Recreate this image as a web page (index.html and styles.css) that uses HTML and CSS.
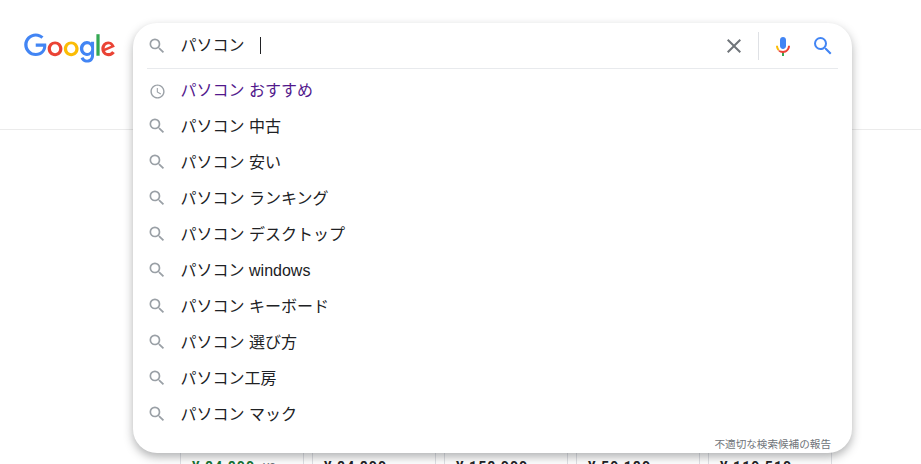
FILE: index.html
```html
<!DOCTYPE html>
<html lang="ja">
<head>
<meta charset="utf-8">
<title>パソコン - Google 検索</title>
<link rel="stylesheet" href="styles.css">
</head>
<body>
<header class="page-header"></header>
<main class="cards">
  <div class="card"><span class="price price-green">¥ 84,800</span><span class="was">¥9</span></div>
  <div class="card"><span class="price">¥ 84,800</span></div>
  <div class="card"><span class="price">¥ 158,000</span></div>
  <div class="card"><span class="price">¥ 59,180</span></div>
  <div class="card"><span class="price">¥ 119,510</span></div>
</main>

<svg class="logo" viewBox="0 0 90 29.3" aria-label="Google">
  <path fill="#4285f4" d="M11.6 22.6C5.4 22.6.2 17.6.2 11.4S5.4.2 11.6.2c3.4 0 5.9 1.3 7.7 3.1l-2.2 2.2c-1.3-1.2-3.1-2.2-5.5-2.2-4.5 0-8.1 3.7-8.1 8.2s3.6 8.2 8.1 8.2c2.9 0 4.6-1.2 5.7-2.3.9-.9 1.5-2.2 1.7-4h-7.4V10.3h10.3c.1.6.2 1.2.2 2 0 2.3-.6 5.1-2.7 7.1-2 2.1-4.5 3.2-7.9 3.2z"/>
  <path fill="#ea4335" d="M38 15.4c0 4.2-3.3 7.3-7.3 7.3s-7.3-3.1-7.3-7.3c0-4.2 3.3-7.3 7.3-7.3s7.3 3 7.3 7.3zm-3.2 0c0-2.6-1.9-4.4-4.1-4.4s-4.1 1.8-4.1 4.4c0 2.6 1.9 4.4 4.1 4.4s4.1-1.8 4.1-4.4z"/>
  <path fill="#fbbc05" d="M54 15.4c0 4.2-3.3 7.3-7.3 7.3s-7.3-3.1-7.3-7.3c0-4.2 3.3-7.3 7.3-7.3s7.3 3 7.3 7.3zm-3.2 0c0-2.6-1.9-4.4-4.1-4.4s-4.1 1.8-4.1 4.4c0 2.6 1.9 4.4 4.1 4.4s4.1-1.8 4.1-4.4z"/>
  <path fill="#4285f4" d="M69.3 8.5v13c0 5.4-3.2 7.6-6.9 7.6-3.5 0-5.7-2.4-6.4-4.3l2.8-1.2c.5 1.2 1.7 2.6 3.6 2.6 2.4 0 3.9-1.5 3.9-4.3v-1.1h-.1c-.7.9-2.1 1.7-3.9 1.7-3.7 0-7-3.2-7-7.3s3.3-7.4 7-7.4c1.8 0 3.2.8 3.9 1.7h.1V8.5h3zm-2.8 6.9c0-2.6-1.7-4.4-3.9-4.4s-4 1.9-4 4.4 1.8 4.3 4 4.3 3.9-1.8 3.9-4.3z"/>
  <path fill="#34a853" d="M71.6 1h3.2v21.3h-3.2z"/>
  <path fill="#ea4335" d="M87.3 17.8l2.5 1.7c-.8 1.2-2.8 3.2-6.1 3.2-4.1 0-7.2-3.2-7.2-7.3 0-4.3 3.1-7.3 6.8-7.3 3.8 0 5.6 3 6.2 4.6l.3.8-9.7 4c.7 1.4 1.9 2.2 3.5 2.2s2.8-.8 3.7-2zm-7.6-2.6l6.5-2.7c-.4-.9-1.4-1.5-2.7-1.5-1.6 0-3.9 1.4-3.8 4.2z"/>
</svg>

<section class="suggest">
  <div class="search-row">
    <svg class="ico" viewBox="0 0 24 24"><use href="#mag"/></svg>
    <div class="query">パソコン<span class="caret"></span></div>
    <div class="actions">
      <svg class="clear" viewBox="0 0 24 24"><path fill="#70757a" d="M19 6.41 17.59 5 12 10.59 6.41 5 5 6.41 10.59 12 5 17.59 6.41 19 12 13.41 17.59 19 19 17.59 13.41 12z"/></svg>
      <span class="vline"></span>
      <svg class="mic" viewBox="0 0 24 24">
        <path fill="#4285f4" d="M12 15c1.66 0 3-1.31 3-2.97V5.98C15 4.31 13.66 3 12 3S9 4.31 9 5.98v6.05C9 13.69 10.34 15 12 15z"/>
        <path fill="#34a853" d="M11 18.07h2V22h-2z"/>
        <path fill="#fbbc05" d="M7.05 16.87c-1.27-1.33-2.05-3.12-2.05-5.1h2c0 1.44.56 2.75 1.47 3.72l-1.42 1.38z"/>
        <path fill="#ea4335" d="M12 16.93c-1.39 0-2.69-.38-3.5-.64l-1.45 .58c1.27 1.33 3.03 2.26 4.95 2.26s3.68-.93 4.95-2.26c1.28-1.33 2.05-3.12 2.05-5.1h-2c0 1.44-.56 2.75-1.47 3.72-.91.96-2.15 1.44-3.53 1.44z"/>
      </svg>
      <svg class="go" viewBox="0 0 24 24"><path fill="#4285f4" d="M15.5 14h-.79l-.28-.27A6.47 6.47 0 0 0 16 9.5 6.5 6.5 0 1 0 9.5 16c1.61 0 3.09-.59 4.23-1.57l.27.28v.79l5 4.99L20.49 19l-4.99-5zm-6 0C7.01 14 5 11.99 5 9.5S7.01 5 9.5 5 14 7.01 14 9.5 11.99 14 9.5 14z"/></svg>
    </div>
  </div>
  <div class="rule"></div>
  <ul class="list">
    <li class="item visited">
      <svg class="clock" viewBox="0 0 24 24"><path fill="#9aa0a6" d="M11.99 2C6.47 2 2 6.48 2 12s4.47 10 9.99 10C17.52 22 22 17.52 22 12S17.52 2 11.99 2zM12 20c-4.42 0-8-3.58-8-8s3.58-8 8-8 8 3.58 8 8-3.58 8-8 8zm.5-13H11v6l5.25 3.15.75-1.23-4.5-2.67z"/></svg>
      <span>パソコン おすすめ</span>
    </li>
    <li class="item"><svg class="ico" viewBox="0 0 24 24"><use href="#mag"/></svg><span>パソコン 中古</span></li>
    <li class="item"><svg class="ico" viewBox="0 0 24 24"><use href="#mag"/></svg><span>パソコン 安い</span></li>
    <li class="item"><svg class="ico" viewBox="0 0 24 24"><use href="#mag"/></svg><span>パソコン ランキング</span></li>
    <li class="item"><svg class="ico" viewBox="0 0 24 24"><use href="#mag"/></svg><span>パソコン デスクトップ</span></li>
    <li class="item"><svg class="ico" viewBox="0 0 24 24"><use href="#mag"/></svg><span>パソコン windows</span></li>
    <li class="item"><svg class="ico" viewBox="0 0 24 24"><use href="#mag"/></svg><span>パソコン キーボード</span></li>
    <li class="item"><svg class="ico" viewBox="0 0 24 24"><use href="#mag"/></svg><span>パソコン 選び方</span></li>
    <li class="item"><svg class="ico" viewBox="0 0 24 24"><use href="#mag"/></svg><span>パソコン工房</span></li>
    <li class="item"><svg class="ico" viewBox="0 0 24 24"><use href="#mag"/></svg><span>パソコン マック</span></li>
  </ul>
  <div class="report">不適切な検索候補の報告</div>
</section>

<svg class="defs" width="0" height="0"><defs><path id="mag" fill="#9aa0a6" d="M15.5 14h-.79l-.28-.27A6.47 6.47 0 0 0 16 9.5 6.5 6.5 0 1 0 9.5 16c1.61 0 3.09-.59 4.23-1.57l.27.28v.79l5 4.99L20.49 19l-4.99-5zm-6 0C7.01 14 5 11.99 5 9.5S7.01 5 9.5 5 14 7.01 14 9.5 11.99 14 9.5 14z"/></defs></svg>
</body>
</html>
```
FILE: styles.css
```css
html, body { margin: 0; height: 464px; overflow: hidden; background: #fff; }
body { position: relative; font-family: Roboto, "Liberation Sans", "Noto Sans CJK JP", sans-serif; color: #202124; }

.page-header { height: 129px; border-bottom: 1px solid #ebebeb; }

.cards { display: flex; gap: 8px; padding: 0 0 0 180px; margin-top: 200px; height: 134px; overflow: hidden; }
.card { width: 124px; height: 200px; flex: none; box-sizing: border-box; border: 1px solid #dfe1e5; padding: 128px 11px 0; display: flex; gap: 8px; align-items: baseline; }
.price { font-size: 14px; font-weight: 700; letter-spacing: 1.05px; white-space: nowrap; }
.price-green { color: #137333; }
.was { font-size: 12px; color: #70757a; }

.logo { position: absolute; left: 24px; top: 33px; width: 91px; height: 30px; }

.suggest { position: absolute; left: 133px; top: 23px; width: 719px; height: 430px; background: #fff; border-radius: 24px; box-shadow: 0 4px 10px rgba(32,33,36,.35); display: flex; flex-direction: column; }

.search-row { height: 45px; display: flex; align-items: center; padding-left: 14px; }
.ico { width: 20px; height: 20px; flex: none; }
.clock { width: 17px; height: 17px; flex: none; margin: 2px 1.5px 0; }
.query { margin-left: 13.6px; font-size: 16px; line-height: 20px; display: flex; align-items: center; font-family: "Liberation Sans", "Noto Sans CJK JP", sans-serif; }
.caret { width: 1px; height: 17px; background: #202124; margin-left: 15.4px; }
.actions { margin-left: auto; display: flex; align-items: center; padding-right: 17px; }
.clear { width: 24px; height: 24px; }
.vline { width: 1px; height: 28px; background: #dfe1e5; margin: 0 12px; }
.mic { width: 24px; height: 24px; margin-right: 16px; }
.go { width: 24px; height: 24px; }

.rule { height: 1px; background: #e8eaed; margin: 0 14px; }

.list { list-style: none; margin: 3px 0 0; padding: 0; }
.item { height: 36px; display: flex; align-items: center; padding-left: 14px; font-size: 16px; font-family: "Liberation Sans", "Noto Sans CJK JP", sans-serif; }
.item span { margin: 0 0 2px 13.6px; }
.visited span { color: #52188c; }

.report { margin-top: auto; align-self: flex-end; padding: 0 21px 1px 0; font-size: 10.6px; line-height: 16px; color: #70757a; font-family: "Liberation Sans", "Noto Sans CJK JP", sans-serif; }

.defs { position: absolute; }
```
